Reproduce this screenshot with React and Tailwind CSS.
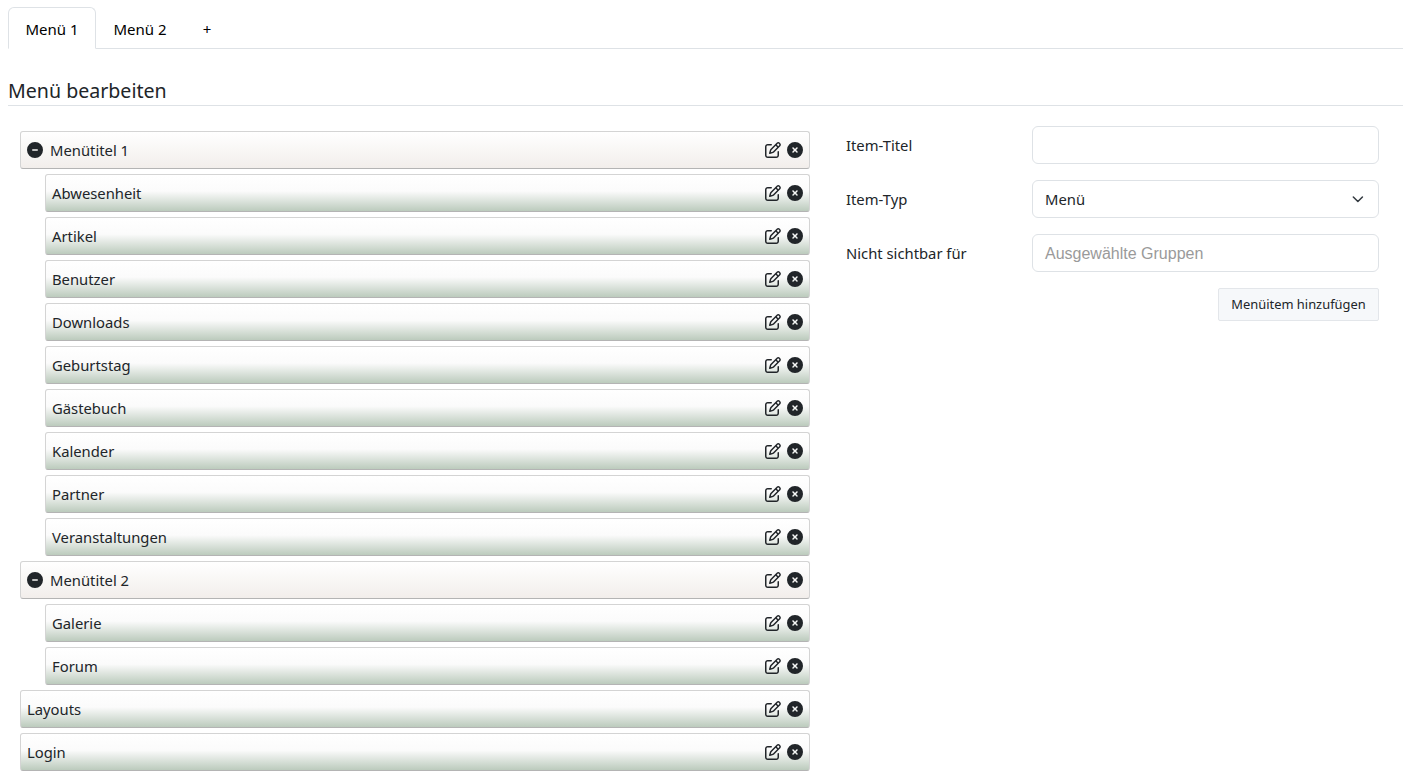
import React from "react";
import { FaCircleMinus, FaCircleXmark, FaRegPenToSquare } from "react-icons/fa6";

const font = "font-['Noto_Sans','Open_Sans',sans-serif]";

function Row({ label, kind = "plain", sub = false, first = false }) {
  const bg =
    kind === "title"
      ? "bg-[linear-gradient(to_bottom,#ffffff_0%,#f2eeeb_100%)]"
      : "bg-[linear-gradient(to_bottom,#ffffff_0%,#fbfbfb_45%,#bccbbd_100%)]";
  return (
    <div className={`${sub ? "ml-[25px]" : ""} ${first ? "" : "mt-[5px]"} h-[38px] flex items-center rounded-[3px] border border-[#d4d4d4] border-b-[#b4b4b4] pl-[6px] pr-[6px] ${bg}`}>
      {kind === "title" && <FaCircleMinus className="w-4 h-4 text-[#212529] mr-[7px]" />}
      <span className="text-[14.8px] text-[#212529] flex-1 leading-none">{label}</span>
      <FaRegPenToSquare className="w-4 h-4 text-[#212529] mr-[6px]" />
      <FaCircleXmark className="w-4 h-4 text-[#212529]" />
    </div>
  );
}

function Field({ label, children }) {
  return (
    <div className="flex items-center h-[38px] mb-4">
      <label className="w-[186px] text-[14.8px] text-[#212529]">{label}</label>
      <div className="flex-1">{children}</div>
    </div>
  );
}

const boxCls = "h-[38px] w-full rounded-md border border-[#dee2e6] bg-white flex items-center px-3";

export default function App() {
  const group1 = ["Abwesenheit", "Artikel", "Benutzer", "Downloads", "Geburtstag", "Gästebuch", "Kalender", "Partner", "Veranstaltungen"];
  return (
    <div className={`${font} bg-white h-[780px] overflow-hidden px-2 pt-[7px] text-[#212529]`}>
      <div className="flex h-[42px] border-b border-[#dee2e6] w-[1395px]">
        <div className="h-[42px] w-[88px] pt-[2px] flex items-center justify-center rounded-t-md border border-[#dee2e6] border-b-white bg-white text-[15px] text-black">Menü 1</div>
        <div className="h-[42px] w-[88px] pt-[2px] flex items-center justify-center text-[15px] text-black">Menü 2</div>
        <div className="h-[42px] w-[46px] pt-[2px] flex items-center justify-center text-[15px] text-black">+</div>
      </div>
      <div className="mt-[28px] h-[29px] border-b border-[#dee2e6] w-[1395px] text-[19.6px] leading-[28px]">Menü bearbeiten</div>
      <div className="flex">
        <div className="w-[790px] ml-3 mt-[25px]">
          <Row label="Menütitel 1" kind="title" first />
          {group1.map((l) => <Row key={l} label={l} sub />)}
          <Row label="Menütitel 2" kind="title" />
          <Row label="Galerie" sub />
          <Row label="Forum" sub />
          <Row label="Layouts" />
          <Row label="Login" />
        </div>
        <div className="w-[533px] ml-[36px] mt-5">
          <Field label="Item-Titel"><div className={boxCls} /></Field>
          <Field label="Item-Typ">
            <div className={`${boxCls} justify-between`}>
              <span className="text-[14.8px]">Menü</span>
              <svg viewBox="0 0 16 16" className="w-4 h-4 text-[#343a40]" fill="none" stroke="currentColor" strokeWidth="2" strokeLinecap="round" strokeLinejoin="round"><path d="m2 5 6 6 6-6" transform="translate(1.8 2.2) scale(.76)" /></svg>
            </div>
          </Field>
          <Field label="Nicht sichtbar für">
            <div className={boxCls}><span className="font-['Liberation_Sans',sans-serif] text-base text-[#9a9a9a] pt-[1px]">Ausgewählte Gruppen</span></div>
          </Field>
          <div className="flex justify-end">
            <button className="h-[33px] w-[161px] rounded-[2px] border border-[#e3e6ea] bg-[#f6f8fa] text-[12.9px] text-[#212529]">Menüitem hinzufügen</button>
          </div>
        </div>
      </div>
    </div>
  );
}
